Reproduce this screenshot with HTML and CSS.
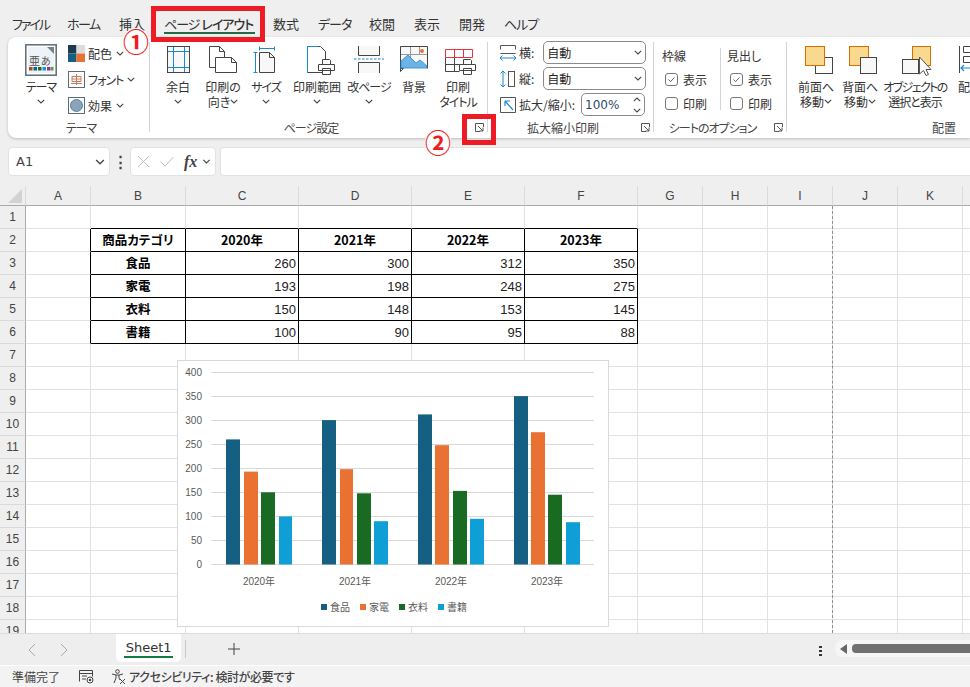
FILE: index.html
```html
<!DOCTYPE html>
<html lang="ja">
<head>
    <meta charset="UTF-8">
    <title>Excel ページレイアウト</title>
    <link rel="stylesheet" href="styles.css">
</head>
<body>

    <svg class="sprite" width="0" height="0">
        <symbol id="chev" viewBox="0 0 8 5"><path d="M.8.8 4 4 7.2.8" fill="none" stroke="#444" stroke-width="1.1"/></symbol>
        <symbol id="launch" viewBox="0 0 9 9"><path d="M8.5 4V.5H.5v8H5M3 3l5 5M8 4.5V8H4.5" fill="none" stroke="#555"/></symbol>
        <symbol id="printer" viewBox="0 0 17 16"><path d="M4.5 5V.5h7l1 1V5M.5 5.5h16v6h-16zM4.5 9.5h8v6h-8z" fill="#fff" stroke="#444"/></symbol>
    </svg>

    <!-- タブ -->
    <nav class="tabs">
        <span class="tab t-file k">ファイル</span>
        <span class="tab t-home k">ホーム</span>
        <span class="tab t-ins">挿入</span>
        <span class="tab t-page k">ページ <b>レイアウト</b></span>
        <span class="tab t-form">数式</span>
        <span class="tab t-data k">データ</span>
        <span class="tab t-rev">校閲</span>
        <span class="tab t-view">表示</span>
        <span class="tab t-dev">開発</span>
        <span class="tab t-help k">ヘルプ</span>
    </nav>

    <!-- リボン -->
    <section class="ribbon">
        <div class="group g-theme">
            <div class="group-body">
                <div class="rbtn w42">
                    <svg class="ico32" viewBox="0 0 32 32">
                        <rect x=".8" y=".8" width="30.4" height="30.4" fill="#fff" stroke="#5f6b78" stroke-width="1.5"/>
                        <rect x="3" y="3" width="26" height="26" fill="#eef3f7"/>
                        <path d="M22 3h7v7z" fill="#77828d"/>
                        <text x="4" y="21" font-size="11" fill="#555">亜</text>
                        <text x="16" y="21" font-size="10" fill="#555">あ</text>
                        <g>
                            <rect x="4" y="23" width="3.5" height="3.5" fill="#a5492c"/>
                            <rect x="8.500" y="23" width="3.5" height="3.500" fill="#156082"/>
                            <rect x="13" y="23" width="3.500" height="3.500" fill="#196b24"/>
                            <rect x="17.500" y="23" width="3.500" height="3.500" fill="#0f9ed5"/>
                            <rect x="22" y="23" width="3.500" height="3.500" fill="#a02b93"/>
                            <rect x="26" y="23" width="2.500" height="3.500" fill="#4ea72e"/>
                        </g>
                    </svg>
                    <span class="lbl k">テーマ</span>
                    <span class="lbl"><svg class="chev"><use href="#chev"/></svg></span>
                </div>
                <div class="stack">
                    <div class="sitem">
                        <svg class="ico17" viewBox="0 0 17 17">
                            <rect width="8.500" height="8.500" fill="#1e3a50"/>
                            <rect x="8.500" width="8.500" height="8.500" fill="#dcdcdc"/>
                            <rect y="8.500" width="8.500" height="8.500" fill="#156082"/>
                            <rect x="8.500" y="8.500" width="8.500" height="8.500" fill="#e97132"/>
                        </svg>
                        <span>配色</span><svg class="chev"><use href="#chev"/></svg>
                    </div>
                    <div class="sitem">
                        <svg class="ico17" viewBox="0 0 17 17">
                            <rect x=".5" y=".5" width="16" height="16" fill="#fff" stroke="#5f6b78"/>
                            <path d="M8.500 3v11M4 5.500h9v5H4zM4 8h9M3 12.500h11" fill="none" stroke="#c87a5a"/>
                        </svg>
                        <span class="k">フォント</span><svg class="chev"><use href="#chev"/></svg>
                    </div>
                    <div class="sitem">
                        <svg class="ico17" viewBox="0 0 17 17">
                            <rect x=".5" y=".5" width="16" height="16" fill="#fff" stroke="#5f6b78"/>
                            <circle cx="8.500" cy="8.500" r="6" fill="#8ba3b8" stroke="#4d86a8"/>
                        </svg>
                        <span>効果</span><svg class="chev"><use href="#chev"/></svg>
                    </div>
                </div>
            </div>
            <div class="group-label label-theme k">テーマ</div>
        </div>
        <i class="sep"></i>

        <div class="group g-page">
            <div class="group-body">
                <div class="rbtn w44">
                    <svg class="ico40" viewBox="0 0 40 32">
                        <rect x="9.500" y="2.500" width="22" height="26" fill="#f8f8f8" stroke="#444"/>
                        <path d="M15.500 3v25M26.500 3v25M10 7.500h21M10 23.500h21" stroke="#1a8ad0" fill="none"/>
                    </svg>
                    <span class="lbl">余白</span>
                    <span class="lbl"><svg class="chev"><use href="#chev"/></svg></span>
                </div>
                <div class="rbtn w46">
                    <svg class="ico40" viewBox="0 0 40 32">
                        <path d="M6.500 2.500h10l5 5v16h-15z" fill="#fff" stroke="#444"/>
                        <path d="M16.500 2.500v5h5" fill="none" stroke="#444"/>
                        <path d="M12.500 13.500h16l5 5v10h-21z" fill="#fff" stroke="#444"/>
                        <path d="M28.500 13.500v5h5" fill="none" stroke="#444"/>
                    </svg>
                    <span class="lbl">印刷の</span>
                    <span class="lbl">向き<svg class="chev"><use href="#chev"/></svg></span>
                </div>
                <div class="rbtn w40">
                    <svg class="ico40" viewBox="0 0 40 32">
                        <path d="M13.500 8.500h10l5 5v15h-15z" fill="#f8f8f8" stroke="#444"/>
                        <path d="M23.500 8.500v5h5" fill="none" stroke="#444"/>
                        <path d="M13 4.500h16M13.500 2.500v4M28.500 2.500v4M9.500 8v21M7.500 8.500h4M7.500 28.500h4" fill="none" stroke="#1a8ad0"/>
                    </svg>
                    <span class="lbl k">サイズ</span>
                    <span class="lbl"><svg class="chev"><use href="#chev"/></svg></span>
                </div>
                <div class="rbtn w62">
                    <svg class="ico40" viewBox="0 0 40 32">
                        <path d="M10.500 2.500h13l5 5v21h-18z" fill="#fff" stroke="#444"/>
                        <path d="M10.500 2.500h11M10.500 2v27" fill="none" stroke="#1a8ad0"/>
                        <svg x="21" y="15" width="17" height="16"><use href="#printer"/></svg>
                    </svg>
                    <span class="lbl">印刷範囲</span>
                    <span class="lbl"><svg class="chev"><use href="#chev"/></svg></span>
                </div>
                <div class="rbtn w42">
                    <svg class="ico40" viewBox="0 0 40 32">
                        <path d="M9.500 2v9.500h21V2M9.500 29V18.500h21V29" fill="#f8f8f8" stroke="#444"/>
                        <path d="M5 15h30" stroke="#1a8ad0" stroke-dasharray="2.500 1.500" fill="none"/>
                    </svg>
                    <span class="lbl k">改ページ</span>
                    <span class="lbl"><svg class="chev"><use href="#chev"/></svg></span>
                </div>
                <div class="rbtn w48">
                    <svg class="ico40" viewBox="0 0 40 32">
                        <path d="M6.500 24.500v-22h27v22M6.500 24.500h3l-3 3z" fill="#f8f8f8" stroke="#444"/>
                        <path d="M16.500 3v12M25.500 3v8M7 10.500h26" fill="none" stroke="#999"/>
                        <path d="M7 24v-7l7-6 8 8 4-3 7 6v2z" fill="#6fb3e6" stroke="#1a8ad0" stroke-width=".8"/>
                        <circle cx="28" cy="7" r="2" fill="#e97132"/>
                    </svg>
                    <span class="lbl">背景</span>
                </div>
                <div class="rbtn w40">
                    <svg class="ico40" viewBox="0 0 40 32">
                        <path d="M7.500 13.500v14h14M7.500 20.500h14M16.500 13v14" fill="none" stroke="#444"/>
                        <path d="M7.500 5.500h27v8h-27zM16.500 5v8M25.500 5v8" fill="#fff" stroke="#e8323c"/>
                        <svg x="21" y="15" width="17" height="16"><use href="#printer"/></svg>
                    </svg>
                    <span class="lbl">印刷</span>
                    <span class="lbl k">タイトル</span>
                </div>
            </div>
            <div class="group-label label-launch k">ページ設定<svg class="launch"><use href="#launch"/></svg></div>
        </div>
        <i class="sep"></i>

        <div class="group g-scale">
            <div class="group-body scale-rows">
                <div class="srow">
                    <svg class="ico18" viewBox="0 0 18 18">
                        <path d="M1.500 1.500h15M1.500 9.500h15M1.500 1.500v4M16.500 1.500v4" fill="none" stroke="#555"/>
                        <path d="M1 14h16M3.500 11.500 1 14l2.500 2.500M14.500 11.500 17 14l-2.500 2.500" fill="none" stroke="#1a8ad0"/>
                    </svg>
                    <span class="slabel">横:</span>
                    <div class="selectbox">自動<svg class="chev"><use href="#chev"/></svg></div>
                </div>
                <div class="srow">
                    <svg class="ico18" viewBox="0 0 18 18">
                        <rect x="9.500" y="1.500" width="6" height="15" fill="#fff" stroke="#555"/>
                        <path d="M4 1v16M1.500 3.500 4 1l2.500 2.500M1.500 14.500 4 17l2.500-2.500" fill="none" stroke="#1a8ad0"/>
                    </svg>
                    <span class="slabel">縦:</span>
                    <div class="selectbox">自動<svg class="chev"><use href="#chev"/></svg></div>
                </div>
                <div class="srow">
                    <svg class="ico18" viewBox="0 0 18 18">
                        <path d="M1.500 1.500h15v15h-15z" fill="#fff" stroke="#555"/>
                        <path d="M6 5l8 9M6 5v5M6 5h5" fill="none" stroke="#1a8ad0" stroke-width="1.200"/>
                    </svg>
                    <span class="slabel">拡大/縮小:</span>
                    <div class="spinbox">100%
                        <span class="spins">
                            <svg class="chev up"><use href="#chev"/></svg>
                            <svg class="chev"><use href="#chev"/></svg>
                        </span>
                    </div>
                </div>
            </div>
            <div class="group-label label-launch">拡大縮小印刷<svg class="launch"><use href="#launch"/></svg></div>
        </div>
        <i class="sep"></i>

        <div class="group g-opts">
            <div class="group-body">
                <div class="optcol">
                    <div class="opthead">枠線</div>
                    <div class="chk"><span class="box"><svg viewBox="0 0 13 13"><path d="M3 6.500 5.500 9 10 4" fill="none" stroke="#444"/></svg></span>表示</div>
                    <div class="chk"><span class="box"></span>印刷</div>
                </div>
                <i class="optsep"></i>
                <div class="optcol">
                    <div class="opthead">見出し</div>
                    <div class="chk"><span class="box"><svg viewBox="0 0 13 13"><path d="M3 6.500 5.500 9 10 4" fill="none" stroke="#444"/></svg></span>表示</div>
                    <div class="chk"><span class="box"></span>印刷</div>
                </div>
            </div>
            <div class="group-label label-launch k">シートのオプション<svg class="launch"><use href="#launch"/></svg></div>
        </div>
        <i class="sep"></i>

        <div class="group g-arrange">
            <div class="group-body">
                <div class="rbtn w44">
                    <svg class="ico40" viewBox="0 0 40 32">
                        <rect x="19.500" y="13.500" width="17" height="16" fill="#fff" stroke="#444"/>
                        <rect x="9.500" y="2.500" width="19" height="19" fill="#f9d98e" stroke="#d86f00"/>
                    </svg>
                    <span class="lbl">前面へ</span>
                    <span class="lbl">移動<svg class="chev"><use href="#chev"/></svg></span>
                </div>
                <div class="rbtn w44">
                    <svg class="ico40" viewBox="0 0 40 32">
                        <rect x="9.500" y="2.500" width="19" height="19" fill="#f9d98e" stroke="#d86f00"/>
                        <rect x="20.500" y="13.500" width="16" height="16" fill="#f8f8f8" stroke="#444"/>
                    </svg>
                    <span class="lbl">背面へ</span>
                    <span class="lbl">移動<svg class="chev"><use href="#chev"/></svg></span>
                </div>
                <div class="rbtn w66">
                    <svg class="ico40" viewBox="0 0 40 32">
                        <rect x="17.500" y="2.500" width="18" height="19" fill="#f9d98e" stroke="#d86f00"/>
                        <rect x="7.500" y="15.500" width="16" height="14" fill="#f8f8f8" stroke="#444"/>
                        <path d="M24.500 13v17l4-3.500 2.500 5 2.500-1-2.500-5h5z" fill="#fff" stroke="#555"/>
                    </svg>
                    <span class="lbl tight">オブジェクトの</span>
                    <span class="lbl k">選択と表示</span>
                </div>
                <div class="rbtn rbtn-last">
                    <svg class="ico40" viewBox="0 0 40 32">
                        <path d="M1.500 2v27M5.500 2.500h20M5.500 8.500h20M5.500 2.500v6M5.500 12.500h20v6h-20z" fill="none" stroke="#444"/>
                        <path d="M3 24h18M6 21l-3 3 3 3" fill="none" stroke="#1a8ad0" stroke-width="1.200"/>
                    </svg>
                    <span class="lbl">配</span>
                </div>
            </div>
            <div class="group-label label-arrange">配置</div>
        </div>
    </section>

    <!-- 数式バー -->
    <section class="formula">
        <div class="namebox">A1<svg class="chev chev-big"><use href="#chev"/></svg></div>
        <span class="fdots">⋮</span>
        <div class="fbtns">
            <svg class="fico" viewBox="0 0 14 14"><path d="M1 1l12 12M13 1 1 13" stroke="#bbb" fill="none"/></svg>
            <svg class="fico fico-ok" viewBox="0 0 16 14"><path d="M1 7l5 5L15 2" stroke="#bbb" fill="none"/></svg>
            <i class="fx">fx</i>
            <svg class="chev"><use href="#chev"/></svg>
        </div>
        <div class="finput"></div>
    </section>

    <!-- シート -->
    <section class="sheet">
        <table class="cells">
            <colgroup>
                <col class="c-rh"><col class="c-def"><col class="c-b"><col class="c-y"><col class="c-y"><col class="c-y"><col class="c-y"><col class="c-def"><col class="c-def"><col class="c-def"><col class="c-def"><col class="c-def"><col class="c-def">
            </colgroup>
            <thead>
                <tr><th class="corner"><i></i></th><th>A</th><th>B</th><th>C</th><th>D</th><th>E</th><th>F</th><th>G</th><th>H</th><th>I</th><th>J</th><th>K</th><th></th></tr>
            </thead>
            <tbody>
                <tr><th>1</th><td></td><td class="bb"></td><td class="bb"></td><td class="bb"></td><td class="bb"></td><td class="bb"></td><td></td><td></td><td></td><td></td><td></td><td></td></tr>
                <tr><th>2</th><td class="br"></td><td class="d hd">商品カテゴリ</td><td class="d hd">2020年</td><td class="d hd">2021年</td><td class="d hd">2022年</td><td class="d hd">2023年</td><td></td><td></td><td></td><td></td><td></td><td></td></tr>
                <tr><th>3</th><td class="br"></td><td class="d hd">食品</td><td class="d n">260</td><td class="d n">300</td><td class="d n">312</td><td class="d n">350</td><td></td><td></td><td></td><td></td><td></td><td></td></tr>
                <tr><th>4</th><td class="br"></td><td class="d hd">家電</td><td class="d n">193</td><td class="d n">198</td><td class="d n">248</td><td class="d n">275</td><td></td><td></td><td></td><td></td><td></td><td></td></tr>
                <tr><th>5</th><td class="br"></td><td class="d hd">衣料</td><td class="d n">150</td><td class="d n">148</td><td class="d n">153</td><td class="d n">145</td><td></td><td></td><td></td><td></td><td></td><td></td></tr>
                <tr><th>6</th><td class="br"></td><td class="d hd">書籍</td><td class="d n">100</td><td class="d n">90</td><td class="d n">95</td><td class="d n">88</td><td></td><td></td><td></td><td></td><td></td><td></td></tr>
                <tr><th>7</th><td></td><td></td><td></td><td></td><td></td><td></td><td></td><td></td><td></td><td></td><td></td><td></td></tr>
                <tr><th>8</th><td></td><td></td><td></td><td></td><td></td><td></td><td></td><td></td><td></td><td></td><td></td><td></td></tr>
                <tr><th>9</th><td></td><td></td><td></td><td></td><td></td><td></td><td></td><td></td><td></td><td></td><td></td><td></td></tr>
                <tr><th>10</th><td></td><td></td><td></td><td></td><td></td><td></td><td></td><td></td><td></td><td></td><td></td><td></td></tr>
                <tr><th>11</th><td></td><td></td><td></td><td></td><td></td><td></td><td></td><td></td><td></td><td></td><td></td><td></td></tr>
                <tr><th>12</th><td></td><td></td><td></td><td></td><td></td><td></td><td></td><td></td><td></td><td></td><td></td><td></td></tr>
                <tr><th>13</th><td></td><td></td><td></td><td></td><td></td><td></td><td></td><td></td><td></td><td></td><td></td><td></td></tr>
                <tr><th>14</th><td></td><td></td><td></td><td></td><td></td><td></td><td></td><td></td><td></td><td></td><td></td><td></td></tr>
                <tr><th>15</th><td></td><td></td><td></td><td></td><td></td><td></td><td></td><td></td><td></td><td></td><td></td><td></td></tr>
                <tr><th>16</th><td></td><td></td><td></td><td></td><td></td><td></td><td></td><td></td><td></td><td></td><td></td><td></td></tr>
                <tr><th>17</th><td></td><td></td><td></td><td></td><td></td><td></td><td></td><td></td><td></td><td></td><td></td><td></td></tr>
                <tr><th>18</th><td></td><td></td><td></td><td></td><td></td><td></td><td></td><td></td><td></td><td></td><td></td><td></td></tr>
                <tr><th>19</th><td></td><td></td><td></td><td></td><td></td><td></td><td></td><td></td><td></td><td></td><td></td><td></td></tr>
            </tbody>
        </table>

        <div class="pagebreak"></div>

        <!-- グラフ -->
        <svg class="chart" viewBox="178 361 430 265">
            <g stroke="#d9d9d9" fill="none">
                <path d="M211 372.500h383M211 396.500h383M211 420.500h383M211 444.500h383M211 468.500h383M211 492.500h383M211 516.500h383M211 540.500h383M211 564.500h383"/>
            </g>
            <g class="ax" text-anchor="end">
                <text x="202" y="376">400</text><text x="202" y="400">350</text><text x="202" y="424">300</text>
                <text x="202" y="448">250</text><text x="202" y="472">200</text><text x="202" y="496">150</text>
                <text x="202" y="520">100</text><text x="202" y="544">50</text><text x="202" y="568">0</text>
            </g>
            <g fill="#156082">
                <rect x="226" y="439.400" width="14" height="125.100"/><rect x="322" y="420.100" width="14" height="144.400"/>
                <rect x="418" y="414.400" width="14" height="150.100"/><rect x="514" y="396.100" width="14" height="168.400"/>
            </g>
            <g fill="#e97132">
                <rect x="244" y="471.600" width="14" height="92.900"/><rect x="340" y="469.200" width="13" height="95.300"/>
                <rect x="435" y="445.200" width="14" height="119.300"/><rect x="531" y="432.200" width="14" height="132.300"/>
            </g>
            <g fill="#196b24">
                <rect x="261" y="492.300" width="14" height="72.200"/><rect x="357" y="493.300" width="14" height="71.200"/>
                <rect x="453" y="490.900" width="14" height="73.600"/><rect x="548" y="494.700" width="14" height="69.800"/>
            </g>
            <g fill="#0f9ed5">
                <rect x="279" y="516.400" width="13" height="48.100"/><rect x="374" y="521.200" width="14" height="43.300"/>
                <rect x="470" y="518.800" width="14" height="45.700"/><rect x="566" y="522.200" width="14" height="42.300"/>
            </g>
            <g class="ax" text-anchor="middle">
                <text x="259" y="585">2020年</text><text x="355" y="585">2021年</text>
                <text x="451" y="585">2022年</text><text x="547" y="585">2023年</text>
            </g>
            <rect x="321" y="604" width="6" height="6" fill="#156082"/>
            <rect x="360" y="604" width="6" height="6" fill="#e97132"/>
            <rect x="399" y="604" width="6" height="6" fill="#196b24"/>
            <rect x="438" y="604" width="6" height="6" fill="#0f9ed5"/>
            <g class="ax">
                <text x="330" y="611">食品</text><text x="369" y="611">家電</text>
                <text x="408" y="611">衣料</text><text x="447" y="611">書籍</text>
            </g>
        </svg>
    </section>

    <!-- シートタブ -->
    <section class="sheetbar">
        <svg class="nav" viewBox="0 0 8 14"><path d="M7 1 1 7l6 6" fill="none" stroke="#aaa"/></svg>
        <svg class="nav nav2" viewBox="0 0 8 14"><path d="M1 1l6 6-6 6" fill="none" stroke="#aaa"/></svg>
        <div class="sheettab">Sheet1</div>
        <i class="tabsep"></i>
        <svg class="plus" viewBox="0 0 12 12"><path d="M6 0v12M0 6h12" stroke="#444" fill="none"/></svg>
        <span class="bardots"></span>
        <div class="hscroll">
            <svg class="harrow" viewBox="0 0 7 10"><path d="M7 0v10L0 5z" fill="#666"/></svg>
            <div class="hthumb"></div>
        </div>
    </section>

    <!-- ステータスバー -->
    <footer class="status">
        <span class="st-ready">準備完了</span>
        <svg class="st-ico" viewBox="0 0 15 15">
            <path d="M.5 12.500v-11h13v6M1 4.500h12M3 7h5M3 10h4" fill="none" stroke="#444"/>
            <circle cx="11" cy="11" r="3" fill="#fff" stroke="#444"/><circle cx="11" cy="11" r="1.300" fill="#444"/>
        </svg>
        <svg class="st-ico st-acc" viewBox="0 0 15 15">
            <circle cx="6.500" cy="2.500" r="1.800" fill="none" stroke="#444"/>
            <path d="M1 5l4 1h3l4-1M5 6v3l-2 5M8 6v3l1 2M9 10l5 5M14 10l-5 5" fill="none" stroke="#444"/>
        </svg>
        <span class="st-acc-text">アクセシビリティ: 検討が必要です</span>
    </footer>

    <!-- 注釈 -->
    <div class="redbox redbox-1"></div>
    <div class="redbox redbox-2"></div>
    <span class="num num-1">①</span>
    <span class="num num-2">②</span>

</body>
</html>
```

FILE: styles.css
```css
* {
    box-sizing: border-box;
}
html, body {
    margin: 0;
    height: 100%;
}
body {
    width: 970px;
    height: 687px;
    overflow: hidden;
    position: relative;
    background-color: #efefef;
    color: #333;
    font-family: "Noto Sans CJK JP", sans-serif;
    font-size: 12px;
    font-feature-settings: "palt";
}
.sprite {
    position: absolute;
}
i {
    font-style: normal;
}
svg {
    display: block;
    flex: none;
}
/* カタカナの字詰め */
.k {
    letter-spacing: -1px;
}
.tight {
    letter-spacing: -1.600px;
}

/* タブ */
.tabs {
    height: 37px;
    display: flex;
    padding: 13px 0 0 12px;
    font-size: 13px;
    line-height: 21px;
}
.tab {
    white-space: nowrap;
}
.tab b {
    font-weight: 500;
}
.t-file { width: 55px; letter-spacing: -2px; }
.t-home { width: 52px; letter-spacing: -1.500px; }
.t-ins { width: 45px; }
.t-page {
    width: 109px;
    height: 21px;
    position: relative;
}
.t-page::after {
    content: "";
    position: absolute;
    left: 0;
    width: 91px;
    top: 19px;
    height: 2px;
    background-color: #1f6e43;
}
.t-form { width: 45px; }
.t-data { width: 51px; }
.t-rev { width: 45px; }
.t-view { width: 45px; }
.t-dev { width: 45px; }

/* リボン */
.ribbon {
    height: 101px;
    margin-left: 8px;
    display: flex;
    background-color: #fff;
    border-radius: 8px 0 0 8px;
    box-shadow: 0 1px 3px rgba(0, 0, 0, 0.22);
    position: relative;
}
.sep {
    width: 1px;
    margin: 5px 0 6px;
    background-color: #d4d4d4;
    flex: none;
}
.group {
    display: flex;
    flex-direction: column;
    flex: none;
}
.g-theme { width: 141px; }
.g-page { width: 337px; }
.g-scale { width: 165px; }
.g-opts { width: 132px; }
.g-arrange { width: 183px; }
.group-body {
    height: 83px;
    display: flex;
    padding-top: 7px;
}
.group-label {
    height: 15px;
    line-height: 15px;
    text-align: center;
    color: #444;
    position: relative;
}
.label-theme {
    padding-left: 5px;
}
.label-launch {
    padding-right: 15px;
}
.launch {
    position: absolute;
    right: 3px;
    top: 3px;
    width: 9px;
    height: 9px;
}
.label-arrange {
    text-align: left;
    padding-left: 145px;
}
.g-theme .group-body {
    padding-left: 12px;
}
.g-page .group-body {
    padding-left: 6px;
}
.g-arrange .group-body {
    padding-left: 7px;
}
.rbtn {
    display: flex;
    flex-direction: column;
    align-items: center;
    flex: none;
}
.w40 { width: 40px; }
.w42 { width: 42px; }
.w44 { width: 44px; }
.w46 { width: 46px; }
.w48 { width: 48px; }
.w62 { width: 62px; }
.w66 { width: 66px; }
.rbtn-last {
    width: 24px;
    margin-left: 10px;
    align-items: flex-start;
}
.ico32 {
    width: 32px;
    height: 32px;
    font-family: "Noto Sans CJK JP", sans-serif;
    margin-bottom: 3px;
}
.ico40 {
    width: 40px;
    height: 32px;
    margin-bottom: 3px;
}
.ico17 {
    width: 17px;
    height: 17px;
}
.ico18 {
    width: 18px;
    height: 18px;
}
.lbl {
    height: 15px;
    line-height: 15px;
    white-space: nowrap;
    display: flex;
    align-items: center;
    justify-content: center;
}
.chev {
    width: 8px;
    height: 5px;
    margin-left: 4px;
}
.lbl > .chev:first-child {
    margin-left: 0;
}
.stack {
    margin-left: 6px;
    display: flex;
    flex-direction: column;
    gap: 9px;
    padding-top: 1px;
}
.sitem {
    display: flex;
    align-items: center;
    height: 17px;
    gap: 3px;
    white-space: nowrap;
}
.sitem .chev {
    margin-left: 1px;
}

/* 拡大縮小 */
.scale-rows {
    flex-direction: column;
    padding: 4px 0 0 11px;
    gap: 3px;
}
.srow {
    display: flex;
    align-items: center;
    height: 23px;
}
.slabel {
    margin-left: 2px;
    white-space: nowrap;
}
.selectbox, .spinbox {
    height: 23px;
    border: 1px solid #8a8a8a;
    border-radius: 5px;
    display: flex;
    align-items: center;
    justify-content: space-between;
    padding: 0 3px;
    color: #222;
}
.selectbox {
    width: 103px;
    margin-left: 9px;
}
.spinbox {
    width: 64px;
    margin-left: 6px;
    font-family: "DejaVu Sans", sans-serif;
    font-size: 12px;
    color: #2b4a6b;
}
.spins {
    display: flex;
    flex-direction: column;
    gap: 6px;
}
.up {
    transform: rotate(180deg);
}

/* シートのオプション */
.g-opts .group-body {
    padding: 10px 0 0 8px;
}
.optcol {
    width: 58px;
    display: flex;
    flex-direction: column;
}
.opthead {
    height: 17px;
    line-height: 17px;
}
.chk {
    height: 31px;
    display: flex;
    align-items: center;
    gap: 5px;
    padding-left: 3px;
}
.chk + .chk {
    margin-top: -7px;
}
.box {
    width: 13px;
    height: 13px;
    border: 1px solid #777;
    border-radius: 3px;
    display: block;
}
.optsep {
    width: 1px;
    height: 62px;
    margin: 1px 6px 0 0;
    background-color: #d4d4d4;
}

/* 数式バー */
.formula {
    height: 29px;
    margin-top: 9px;
    display: flex;
    align-items: stretch;
    padding-left: 8px;
}
.namebox, .fbtns, .finput {
    background-color: #fff;
    border: 1px solid #e2e2e2;
    border-radius: 4px;
}
.namebox {
    width: 102px;
    display: flex;
    align-items: center;
    justify-content: space-between;
    padding: 0 4px 0 7px;
    font-family: "DejaVu Sans", sans-serif;
    font-size: 13px;
    color: #444;
}
.chev-big {
    width: 10px;
    height: 6px;
}
.fdots {
    width: 20px;
    text-align: center;
    line-height: 27px;
    font-size: 15px;
    font-weight: bold;
    color: #444;
}
.fbtns {
    width: 86px;
    display: flex;
    align-items: center;
    padding-left: 6px;
    gap: 9px;
}
.fico {
    width: 13px;
    height: 13px;
}
.fico-ok {
    width: 16px;
}
.fx {
    font-family: "Liberation Serif", serif;
    font-style: italic;
    font-weight: bold;
    font-size: 16px;
    color: #444;
}
.fbtns .chev {
    margin-left: -4px;
    width: 9px;
}
.finput {
    margin-left: 4px;
    flex: 1;
    border-right: none;
    border-radius: 4px 0 0 4px;
}

/* シート */
.sheet {
    height: 447px;
    margin-top: 10px;
    overflow: hidden;
    position: relative;
}
.cells {
    width: 1028px;
    table-layout: fixed;
    border-collapse: separate;
    border-spacing: 0;
    font-family: "Liberation Sans", sans-serif;
}
.c-rh { width: 26px; }
.c-def { width: 65px; }
.c-b { width: 95px; }
.c-y { width: 113px; }
.cells th {
    font-weight: normal;
    font-size: 12px;
    color: #444;
    background-color: #efefef;
    padding: 0;
}
.cells thead th {
    height: 20px;
    border-right: 1px solid #dadada;
    border-bottom: 1px solid #a9a9a9;
}
.cells tbody th {
    height: 23px;
    border-right: 1px solid #a9a9a9;
    border-bottom: 1px solid #dadada;
}
.cells td {
    height: 23px;
    padding: 0 2px;
    background-color: #fff;
    border-right: 1px solid #e2e2e2;
    border-bottom: 1px solid #e2e2e2;
    font-size: 13px;
    line-height: 1;
    color: #000;
}
.cells td.bb {
    border-bottom-color: #000;
}
.cells td.br {
    border-right-color: #000;
}
.cells td.d {
    border-right-color: #000;
    border-bottom-color: #000;
}
.cells td.hd {
    text-align: center;
    font-family: "Noto Sans CJK JP", sans-serif;
    font-weight: bold;
    font-size: 12.500px;
}
.cells td.n {
    text-align: right;
    color: #222;
}
.cells .corner {
    position: relative;
}
.corner i {
    position: absolute;
    left: 8px;
    top: 3px;
    width: 14px;
    height: 14px;
    background-color: #d2d2d2;
    clip-path: polygon(100% 0, 100% 100%, 0 100%);
}
.pagebreak {
    position: absolute;
    left: 832px;
    top: 20px;
    bottom: 0;
    border-left: 1px dashed #8f8f8f;
}
.chart {
    position: absolute;
    left: 177px;
    top: 174px;
    box-sizing: content-box;
    width: 430px;
    height: 265px;
    background-color: #fff;
    border: 1px solid #d9d9d9;
}
.ax text {
    font-family: "Liberation Sans", "Noto Sans CJK JP", sans-serif;
    font-size: 10px;
    fill: #595959;
}

/* シートタブ */
.sheetbar {
    height: 33px;
    display: flex;
    align-items: flex-start;
    background-color: #eeeeee;
    border-top: 1px solid #dcdcdc;
    border-bottom: 1px solid #fff;
    position: relative;
}
.nav {
    width: 8px;
    height: 14px;
    margin: 9px 0 0 28px;
}
.nav2 {
    margin-left: 24px;
}
.sheettab {
    width: 68px;
    height: 28px;
    margin-left: 48px;
    padding-top: 5px;
    background-color: #fff;
    border-radius: 0 0 5px 5px;
    text-align: center;
    font-family: "DejaVu Sans", sans-serif;
    font-size: 13px;
    line-height: 18px;
    color: #333;
    position: relative;
}
.sheettab::after {
    content: "";
    position: absolute;
    left: 8px;
    right: 8px;
    bottom: 4px;
    height: 2px;
    background-color: #107c41;
}
.tabsep {
    width: 1px;
    height: 18px;
    margin: 6px 0 0 4px;
    background-color: #c8c8c8;
}
.plus {
    width: 12px;
    height: 12px;
    margin: 9px 0 0 42px;
}
.bardots {
    width: 3px;
    height: 11px;
    margin: 11px 0 0 579px;
    background: radial-gradient(circle, #333 1.300px, transparent 1.500px) 0 0 / 3px 4px;
}
.hscroll {
    width: 140px;
    height: 17px;
    margin: 6px 0 0 13px;
    background-color: #f6f6f6;
    border-radius: 8px 0 0 8px;
    display: flex;
    align-items: center;
    padding-left: 5px;
}
.harrow {
    width: 7px;
    height: 10px;
}
.hthumb {
    margin-left: 5px;
    flex: 1;
    height: 9px;
    background-color: #707070;
    border-radius: 4px 0 0 4px;
}

/* ステータスバー */
.status {
    height: 21px;
    display: flex;
    align-items: center;
    padding-left: 12px;
    background-color: #f3f3f3;
    color: #444;
}
.st-ready {
    width: 67px;
}
.st-ico {
    width: 15px;
    height: 15px;
}
.st-acc {
    margin-left: 17px;
}
.st-acc-text {
    margin-left: 3px;
    font-weight: 500;
    letter-spacing: -0.400px;
}

/* 注釈 */
.redbox {
    position: absolute;
    border: 5px solid #ed1c24;
}
.redbox-1 {
    left: 151px;
    top: 6px;
    width: 114px;
    height: 36px;
}
.redbox-2 {
    left: 462px;
    top: 114px;
    width: 34px;
    height: 31px;
}
.num {
    position: absolute;
    width: 26px;
    height: 26px;
    border-radius: 50%;
    background-color: #fff;
    color: #ed1c24;
    font-size: 26px;
    font-weight: bold;
    line-height: 26px;
    text-align: center;
}
.num-1 {
    left: 123px;
    top: 28px;
}
.num-2 {
    left: 425px;
    top: 129px;
}
```
